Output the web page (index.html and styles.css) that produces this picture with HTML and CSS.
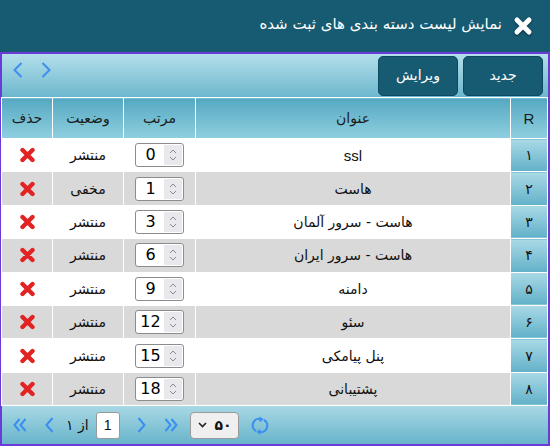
FILE: index.html
```html
<!DOCTYPE html>
<html lang="fa" dir="rtl">
<head>
<meta charset="utf-8">
<link rel="stylesheet" href="styles.css">
</head>
<body>
<div class="dialog">
  <header class="titlebar">
    <svg class="close-icon" width="20" height="20" viewBox="0 0 20 20"><path d="M4 4L16 16M16 4L4 16" stroke="#fff" stroke-width="5" stroke-linecap="round"/></svg>
    <span class="title">نمایش لیست دسته بندی های ثبت شده</span>
  </header>
  <div class="panel">
    <div class="toolbar">
      <button class="btn">جدید</button>
      <button class="btn">ویرایش</button>
      <div class="nav">
        <svg width="10" height="16" viewBox="0 0 10 16"><polyline points="8.5,1 1.5,8 8.5,15" fill="none" stroke="#3a8ff0" stroke-width="2"/></svg>
        <svg width="10" height="16" viewBox="0 0 10 16"><polyline points="1.5,1 8.5,8 1.5,15" fill="none" stroke="#3a8ff0" stroke-width="2"/></svg>
      </div>
    </div>
    <table class="grid">
      <colgroup><col class="c-r"><col class="c-title"><col class="c-order"><col class="c-status"><col class="c-del"></colgroup>
      <thead>
        <tr><th class="rh">R</th><th>عنوان</th><th>مرتب</th><th>وضعیت</th><th>حذف</th></tr>
      </thead>
      <tbody>
        <tr><td class="rn">۱</td><td class="latin">ssl</td><td><div class="num"><span class="val">0</span><span class="spin"><svg width="8" height="14" viewBox="0 0 8 14"><polyline points="1,5 4,2 7,5" fill="none" stroke="#8a8a90" stroke-width="1"/><polyline points="1,9 4,12 7,9" fill="none" stroke="#8a8a90" stroke-width="1"/></svg></span></div></td><td>منتشر</td><td><svg class="del" width="17" height="16" viewBox="0 0 17 16"><path d="M3.5 3L13.5 13M13.5 3L3.5 13" stroke="#e12323" stroke-width="4.4" stroke-linecap="round"/></svg></td></tr>
        <tr><td class="rn">۲</td><td>هاست</td><td><div class="num"><span class="val">1</span><span class="spin"><svg width="8" height="14" viewBox="0 0 8 14"><polyline points="1,5 4,2 7,5" fill="none" stroke="#8a8a90" stroke-width="1"/><polyline points="1,9 4,12 7,9" fill="none" stroke="#8a8a90" stroke-width="1"/></svg></span></div></td><td>مخفی</td><td><svg class="del" width="17" height="16" viewBox="0 0 17 16"><path d="M3.5 3L13.5 13M13.5 3L3.5 13" stroke="#e12323" stroke-width="4.4" stroke-linecap="round"/></svg></td></tr>
        <tr><td class="rn">۳</td><td>هاست - سرور آلمان</td><td><div class="num"><span class="val">3</span><span class="spin"><svg width="8" height="14" viewBox="0 0 8 14"><polyline points="1,5 4,2 7,5" fill="none" stroke="#8a8a90" stroke-width="1"/><polyline points="1,9 4,12 7,9" fill="none" stroke="#8a8a90" stroke-width="1"/></svg></span></div></td><td>منتشر</td><td><svg class="del" width="17" height="16" viewBox="0 0 17 16"><path d="M3.5 3L13.5 13M13.5 3L3.5 13" stroke="#e12323" stroke-width="4.4" stroke-linecap="round"/></svg></td></tr>
        <tr><td class="rn">۴</td><td>هاست - سرور ایران</td><td><div class="num"><span class="val">6</span><span class="spin"><svg width="8" height="14" viewBox="0 0 8 14"><polyline points="1,5 4,2 7,5" fill="none" stroke="#8a8a90" stroke-width="1"/><polyline points="1,9 4,12 7,9" fill="none" stroke="#8a8a90" stroke-width="1"/></svg></span></div></td><td>منتشر</td><td><svg class="del" width="17" height="16" viewBox="0 0 17 16"><path d="M3.5 3L13.5 13M13.5 3L3.5 13" stroke="#e12323" stroke-width="4.4" stroke-linecap="round"/></svg></td></tr>
        <tr><td class="rn">۵</td><td>دامنه</td><td><div class="num"><span class="val">9</span><span class="spin"><svg width="8" height="14" viewBox="0 0 8 14"><polyline points="1,5 4,2 7,5" fill="none" stroke="#8a8a90" stroke-width="1"/><polyline points="1,9 4,12 7,9" fill="none" stroke="#8a8a90" stroke-width="1"/></svg></span></div></td><td>منتشر</td><td><svg class="del" width="17" height="16" viewBox="0 0 17 16"><path d="M3.5 3L13.5 13M13.5 3L3.5 13" stroke="#e12323" stroke-width="4.4" stroke-linecap="round"/></svg></td></tr>
        <tr><td class="rn">۶</td><td>سئو</td><td><div class="num"><span class="val">12</span><span class="spin"><svg width="8" height="14" viewBox="0 0 8 14"><polyline points="1,5 4,2 7,5" fill="none" stroke="#8a8a90" stroke-width="1"/><polyline points="1,9 4,12 7,9" fill="none" stroke="#8a8a90" stroke-width="1"/></svg></span></div></td><td>منتشر</td><td><svg class="del" width="17" height="16" viewBox="0 0 17 16"><path d="M3.5 3L13.5 13M13.5 3L3.5 13" stroke="#e12323" stroke-width="4.4" stroke-linecap="round"/></svg></td></tr>
        <tr><td class="rn">۷</td><td>پنل پیامکی</td><td><div class="num"><span class="val">15</span><span class="spin"><svg width="8" height="14" viewBox="0 0 8 14"><polyline points="1,5 4,2 7,5" fill="none" stroke="#8a8a90" stroke-width="1"/><polyline points="1,9 4,12 7,9" fill="none" stroke="#8a8a90" stroke-width="1"/></svg></span></div></td><td>منتشر</td><td><svg class="del" width="17" height="16" viewBox="0 0 17 16"><path d="M3.5 3L13.5 13M13.5 3L3.5 13" stroke="#e12323" stroke-width="4.4" stroke-linecap="round"/></svg></td></tr>
        <tr><td class="rn">۸</td><td>پشتیبانی</td><td><div class="num"><span class="val">18</span><span class="spin"><svg width="8" height="14" viewBox="0 0 8 14"><polyline points="1,5 4,2 7,5" fill="none" stroke="#8a8a90" stroke-width="1"/><polyline points="1,9 4,12 7,9" fill="none" stroke="#8a8a90" stroke-width="1"/></svg></span></div></td><td>منتشر</td><td><svg class="del" width="17" height="16" viewBox="0 0 17 16"><path d="M3.5 3L13.5 13M13.5 3L3.5 13" stroke="#e12323" stroke-width="4.4" stroke-linecap="round"/></svg></td></tr>
      </tbody>
    </table>
    <div class="pager">
      <svg class="p-first" width="14" height="14" viewBox="0 0 14 14"><polyline points="6.5,1 1.5,7 6.5,13" fill="none" stroke="#3a8ff0" stroke-width="2"/><polyline points="12.5,1 7.5,7 12.5,13" fill="none" stroke="#3a8ff0" stroke-width="2"/></svg>
      <svg class="p-prev" width="9" height="16" viewBox="0 0 9 16"><polyline points="7.5,1 1.5,8 7.5,15" fill="none" stroke="#3a8ff0" stroke-width="2"/></svg>
      <span class="p-text">از ۱</span>
      <span class="p-input">1</span>
      <svg class="p-next" width="9" height="16" viewBox="0 0 9 16"><polyline points="1.5,1 7.5,8 1.5,15" fill="none" stroke="#3a8ff0" stroke-width="2"/></svg>
      <svg class="p-last" width="14" height="14" viewBox="0 0 14 14"><polyline points="1.5,1 6.5,7 1.5,13" fill="none" stroke="#3a8ff0" stroke-width="2"/><polyline points="7.5,1 12.5,7 7.5,13" fill="none" stroke="#3a8ff0" stroke-width="2"/></svg>
      <span class="p-select"><svg width="9" height="6" viewBox="0 0 9 6"><polyline points="1,1 4.5,4.5 8,1" fill="none" stroke="#222" stroke-width="1.6"/></svg><span class="p-size">۵۰</span></span>
      <svg class="p-refresh" width="18" height="19" viewBox="0 0 18 19"><path d="M10 3.1A6.5 6.5 0 0 0 5 15" fill="none" stroke="#3a8ff0" stroke-width="2.2"/><polygon points="8.5,0.4 12.8,3.3 8.5,6.2" fill="#3a8ff0"/><path d="M8 15.9A6.5 6.5 0 0 0 13 4" fill="none" stroke="#3a8ff0" stroke-width="2.2"/><polygon points="9.5,12.9 5.2,15.8 9.5,18.7" fill="#3a8ff0"/></svg>
    </div>
  </div>
</div>
</body>
</html>
```
FILE: styles.css
```css
* { box-sizing: border-box; }
body {
  margin: 0;
  font-family: "DejaVu Sans", sans-serif;
  direction: rtl;
  background: #fff;
}
.dialog {
  width: 550px;
  height: 446px;
  display: flex;
  flex-direction: column;
  background: #175b72;
}
.titlebar {
  height: 52px;
  flex: none;
  display: flex;
  align-items: center;
  gap: 11px;
  padding-right: 17px;
  color: #fff;
  font-size: 15px;
}
.close-icon { filter: drop-shadow(0 1px 1px rgba(0,0,0,0.5)); }
.title { padding-bottom: 4px; }
.panel {
  flex: 1;
  display: flex;
  flex-direction: column;
  border: 2px solid #6a3bd6;
  background: #fff;
}
.toolbar {
  height: 43px;
  flex: none;
  display: flex;
  align-items: flex-start;
  gap: 5px;
  padding: 2px 5px 0 0;
  background: linear-gradient(#b4dfea, #6cb7cd);
}
.btn {
  width: 80px;
  height: 40px;
  background: #175b72;
  border: 1px solid #0e4a5e;
  border-radius: 5px;
  color: #fff;
  font-family: "DejaVu Sans", sans-serif;
  font-size: 14px;
  padding: 0 0 2px;
}
.nav {
  margin-right: auto;
  direction: ltr;
  display: flex;
  gap: 18px;
  padding: 6px 0 0 11px;
}
.grid {
  width: 546px;
  border-collapse: collapse;
  table-layout: fixed;
  font-size: 14px;
  color: #111;
}
.c-r { width: 37px; }
.c-title { width: 315px; }
.c-order { width: 72px; }
.c-status { width: 71px; }
.c-del { width: 51px; }
.grid th, .grid td {
  border: 1px solid #fff;
  text-align: center;
  padding: 0;
}
.grid th {
  height: 41px;
  font-weight: normal;
  background: linear-gradient(#55a8c2, #8fd0e0);
  color: #1a1a1a;
}
.grid th.rh { font-family: "Liberation Sans", sans-serif; font-size: 15px; }
.grid td { height: 33.4px; }
.grid tbody tr:nth-child(even) td { background: #d9d9d9; }
.grid td.rn {
  background: linear-gradient(#aad9e6, #62b1c9) !important;
  font-size: 14px;
}
.grid td.latin { font-family: "Liberation Sans", sans-serif; font-size: 15px; }
.num {
  direction: ltr;
  width: 49px;
  height: 24px;
  margin: 0 auto;
  display: flex;
  align-items: center;
  border: 1px solid #8c8c8c;
  border-radius: 3px;
  background: #fff;
  padding: 1px;
}
.val {
  flex: 1;
  text-align: center;
  font-size: 16px;
  color: #000;
  line-height: 20px;
}
.spin {
  width: 18px;
  height: 20px;
  background: #e9e9ed;
  display: flex;
  align-items: center;
  justify-content: center;
}
.del { display: block; margin: 0 auto; }
.pager {
  flex: 1;
  direction: ltr;
  display: flex;
  align-items: center;
  padding-left: 11px;
  background: linear-gradient(#a8d8e5, #68b4cb);
}
.p-prev { margin-left: 18px; }
.p-text {
  direction: rtl;
  margin-left: 12px;
  font-size: 14px;
  color: #111;
}
.p-input {
  margin-left: 7px;
  width: 24px;
  height: 27px;
  display: flex;
  align-items: center;
  justify-content: center;
  background: #fff;
  border: 1px solid #999;
  border-radius: 3px;
  font-family: "Liberation Sans", sans-serif;
  font-size: 14px;
  color: #111;
}
.p-next { margin-left: 17px; }
.p-last { margin-left: 18px; }
.p-select {
  margin-left: 12px;
  width: 49px;
  height: 27px;
  display: flex;
  align-items: center;
  justify-content: space-between;
  padding: 0 6px 0 7px;
  background: #efefef;
  border: 1px solid #9a9a9a;
  border-radius: 4px;
}
.p-size { font-size: 14px; font-weight: bold; color: #111; }
.p-refresh { margin-left: 12px; }
```
